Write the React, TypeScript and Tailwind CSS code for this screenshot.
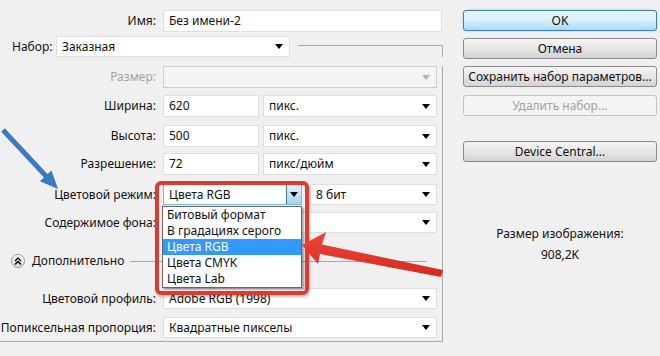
import React from "react";

const Arrow = ({ color = "#000" }: { color?: string }) => (
  <svg width="8" height="5" viewBox="0 0 8 5" className="shrink-0">
    <path d="M0 0 L8 0 L4 5 Z" fill={color} />
  </svg>
);

function Select({ text, w, disabled }: { text?: string; w: string; disabled?: boolean }) {
  return (
    <div
      className={`${w} h-full flex items-center justify-between pl-[5px] pr-[6px] border ${
        disabled ? "bg-[#f4f4f4] border-[#cfcfcf]" : "bg-white border-[#dedede]"
      }`}
    >
      <span className="whitespace-nowrap leading-[16px]">{text}</span>
      <Arrow color={disabled ? "#b4b4b4" : "#000"} />
    </div>
  );
}

function Input({ value, w }: { value: string; w: string }) {
  return (
    <div className={`${w} h-full flex items-center pl-[5px] bg-white border border-[#dedede] leading-[16px]`}>
      {value}
    </div>
  );
}

function Row({
  label,
  top,
  h = "h-[21px]",
  grey,
  children,
}: {
  label: string;
  top: string;
  h?: string;
  grey?: boolean;
  children: React.ReactNode;
}) {
  return (
    <div className={`flex items-center ${top} ${h}`}>
      <span className={`w-[157px] text-right pr-[1px] leading-[16px] ${grey ? "text-[#a3a3a3]" : ""}`}>{label}</span>
      <div className="ml-[6px] flex h-full">{children}</div>
    </div>
  );
}

function Button({ text, top, primary, disabled }: { text: string; top: string; primary?: boolean; disabled?: boolean }) {
  const look = primary
    ? "border-[#3c7fb1] bg-gradient-to-b from-[#eaf6fd] via-[#d9f0fc] to-[#a7d9f5] shadow-[0_0_2px_#7fc6f0]"
    : disabled
    ? "border-[#c4c4c4] bg-[#f4f4f4] text-[#a3a3a3]"
    : "border-[#8a8a8a] bg-gradient-to-b from-[#f6f6f6] via-[#e6e6e6] to-[#d4d4d4]";
  return (
    <div className={`${top} h-[21px] flex items-center justify-center rounded-[3px] border leading-[16px] ${look}`}>
      {text}
    </div>
  );
}

export default function App() {
  const modes = ["Битовый формат", "В градациях серого", "Цвета RGB", "Цвета CMYK", "Цвета Lab"];

  return (
    <div className="relative w-[660px] h-[356px] overflow-hidden bg-[#f0f0f0] text-[12px] leading-none text-[#111] font-['Noto_Sans',sans-serif]">
      <div className="flex">
        {/* left column */}
        <div className="w-[443px] pt-[10px]">
          <Row label="Имя:" top="" h="h-[22px]">
            <Input value="Без имени-2" w="w-[279px]" />
          </Row>

          <div className="mt-[4px] flex h-[21px]">
            <span className="w-[56px] pl-[12px] self-center leading-[16px]">Набор:</span>
            <Select text="Заказная" w="w-[234px]" />
            <div className="ml-[8px] mt-[9px] flex-1 border-t border-r border-[#a8a8a8]" />
          </div>

          <div className="border-r border-b border-[#a8a8a8] pb-[3px]">
            <Row label="Размер:" top="mt-[9px]" h="h-[22px]" grey>
              <Select w="w-[274px]" disabled />
            </Row>
            <Row label="Ширина:" top="mt-[7px]" h="h-[22px]">
              <Input value="620" w="w-[96px]" />
              <div className="ml-[4px] h-full">
                <Select text="пикс." w="w-[174px]" />
              </div>
            </Row>
            <Row label="Высота:" top="mt-[8px]" h="h-[22px]">
              <Input value="500" w="w-[96px]" />
              <div className="ml-[4px] h-full">
                <Select text="пикс." w="w-[174px]" />
              </div>
            </Row>
            <Row label="Разрешение:" top="mt-[6px]" h="h-[22px]">
              <Input value="72" w="w-[96px]" />
              <div className="ml-[4px] h-full">
                <Select text="пикс/дюйм" w="w-[174px]" />
              </div>
            </Row>
            <Row label="Цветовой режим:" top="mt-[9px]">
              <div className="w-[139px] h-full flex items-center justify-between pl-[5px] bg-white border border-[#7eb4ea]">
                <span className="leading-[16px]">Цвета RGB</span>
                <div className="w-[15px] h-full flex items-center justify-center border-l border-[#3c7fb1] bg-gradient-to-b from-[#e5f4fc] to-[#9fd2f0]">
                  <Arrow />
                </div>
              </div>
              <div className="ml-[8px] h-full">
                <Select text="8 бит" w="w-[127px]" />
              </div>
            </Row>
            <Row label="Содержимое фона:" top="mt-[7px]">
              <Select w="w-[274px]" />
            </Row>

            <div className="mt-[21px] h-[14px] flex items-center">
              <div className="ml-[11px] w-[14px] h-[14px] rounded-full border border-[#9a9a9a] bg-gradient-to-b from-white to-[#dcdcdc] flex items-center justify-center">
                <svg width="8" height="8" viewBox="0 0 8 8">
                  <path d="M1 4 L4 1 L7 4 M1 7.5 L4 4.5 L7 7.5" stroke="#000" strokeWidth="1.4" fill="none" />
                </svg>
              </div>
              <span className="ml-[7px] leading-[16px]">Дополнительно</span>
              <div className="ml-[6px] w-[297px] h-px bg-[#a8a8a8]" />
            </div>

            <Row label="Цветовой профиль:" top="mt-[20px]">
              <Select text="Adobe RGB (1998)" w="w-[274px]" />
            </Row>
            <Row label="Попиксельная пропорция:" top="mt-[8px]">
              <Select text="Квадратные пикселы" w="w-[274px]" />
            </Row>
          </div>
        </div>

        {/* right column */}
        <div className="ml-[20px] w-[194px] pt-[10px]">
          <Button text="OK" top="" primary />
          <Button text="Отмена" top="mt-[7px]" />
          <Button text="Сохранить набор параметров..." top="mt-[7px]" />
          <Button text="Удалить набор..." top="mt-[8px]" disabled />
          <Button text="Device Central..." top="mt-[25px]" />
          <div className="mt-[64px] text-center leading-[16px]">Размер изображения:</div>
          <div className="mt-[5px] text-center leading-[16px]">908,2K</div>
        </div>
      </div>

      {/* opened dropdown list */}
      <div className="absolute left-[162px] top-[206px] w-[140px] bg-white border border-[#646464] shadow-[2px_2px_2px_rgba(0,0,0,0.35)]">
        {modes.map((m) => (
          <div
            key={m}
            className={`h-[16px] leading-[16px] pl-[4px] ${m === "Цвета RGB" ? "bg-[#3399ff] text-white" : ""}`}
          >
            {m}
          </div>
        ))}
      </div>

      {/* red annotation frame */}
      <div className="absolute left-[155px] top-[181px] w-[154px] h-[114px] rounded-[6px] border-[4px] border-[#dd3a30] shadow-[1px_2px_3px_rgba(0,0,0,0.25)]" />

      {/* annotation arrows */}
      <svg className="absolute left-0 top-0 pointer-events-none" width="660" height="356" viewBox="0 0 660 356">
        <defs>
          <linearGradient id="redg" x1="0" y1="0" x2="0" y2="1">
            <stop offset="0" stopColor="#f0473b" />
            <stop offset="1" stopColor="#d22a22" />
          </linearGradient>
        </defs>
        <polygon
          points="4.8,128.3 47.5,174.1 51.5,170.4 58,189 39.9,181.3 43.9,177.5 1.2,131.7"
          fill="#3a79c4"
        />
        <polygon
          points="302,245 326,232 322,244.5 443,270 441,277 320,254 318,264"
          fill="url(#redg)"
        />
      </svg>
    </div>
  );
}
